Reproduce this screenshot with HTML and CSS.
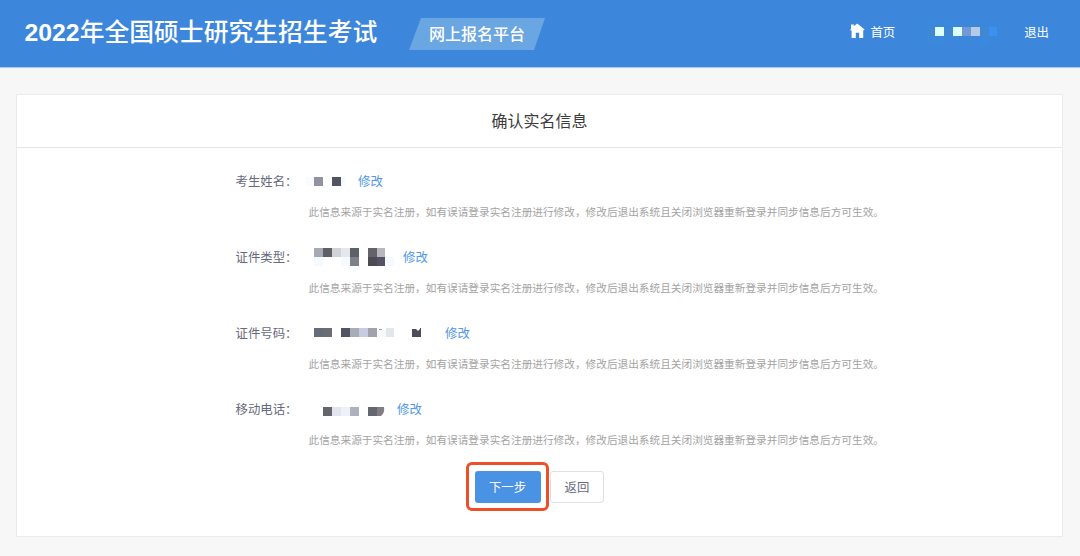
FILE: index.html
```html
<!DOCTYPE html>
<html lang="zh-CN">
<head>
<meta charset="utf-8">
<title>网上报名平台</title>
<link rel="stylesheet" href="styles.css">
</head>
<body>
<header class="header">
  <h1 class="title"><span class="year">2022</span>年全国硕士研究生招生考试</h1>
  <div class="badge">网上报名平台</div>
  <nav class="nav">
    <a class="home"><svg class="home-icon" width="15" height="16" viewBox="0 0 15 16"><path fill="#fff" d="M1 1.4h2.8v1.8L7.2.4 14.6 6.6l-.7 1-.7-.4V15H9.2V9.8H5.8V15H1.6V7.2l-.8.5L.2 6.7 1 6z"/></svg>首页</a>
    <svg class="user" width="94" height="32" viewBox="0 0 94 32">
      <rect x="1" y="4" width="92" height="24" rx="12" fill="#3a87dc"/>
      <path fill="#3b89de" d="M17 3h9v6h-9zM34 3h9v6h-9zM17 21h18v5H17zM70 21h9v8h-9z"/>
      <path fill="#4088d0" d="M17 12h8v9h-8zM34 12h9v9h-9zM70 12h8v9h-8z"/>
      <path fill="#dcffff" d="M25 11h9v9h-9zM43 11h9v9h-9z"/>
      <path fill="#7299d5" d="M52 11h9v9h-9z"/><path fill="#b6c9e9" d="M61 11h9v9h-9z"/><path fill="#3d8ff0" d="M79 11h8v9h-8z"/>
    </svg>
    <a class="logout">退出</a>
  </nav>
</header>
<main class="card">
  <h2 class="card-title">确认实名信息</h2>
  <div class="form">
    <div class="row">
      <div class="label"><span>考生姓名</span><span class="colon">：</span></div>
      <div class="value">
        <svg width="50" height="32" viewBox="0 0 50 32"><path fill="#f9fcff" d="M1 12h8v9H1zM36 12h5v9h-5z"/><path fill="#9293a0" d="M9 12h9v9H9z"/><path fill="#525463" d="M27 12h9v9h-9z"/></svg>
        <a class="link">修改</a>
      </div>
      <p class="note">此信息来源于实名注册，如有误请登录实名注册进行修改，修改后退出系统且关闭浏览器重新登录并同步信息后方可生效。</p>
    </div>
    <div class="row">
      <div class="label"><span>证件类型</span><span class="colon">：</span></div>
      <div class="value">
        <svg width="95" height="32" viewBox="0 0 95 32"><path fill="#f5faff" d="M9 16h9v9H9zM36 16h9v9h-9zM80 16h9v9h-9z"/><path fill="#a7a9b5" d="M9 7h9v9H9z"/><path fill="#5e6068" d="M18 7h9v9h-9zM45 7h9v9h-9z"/><path fill="#d2d3d6" d="M27 7h9v9h-9z"/><path fill="#e5e7ed" d="M36 7h9v9h-9z"/><path fill="#7e808b" d="M45 16h9v9h-9z"/><path fill="#64636c" d="M63 7h9v9h-9z"/><path fill="#b7b8bd" d="M72 7h8v9h-8z"/><path fill="#4b4b51" d="M63 16h9v9h-9z"/><path fill="#535365" d="M72 16h8v9h-8z"/></svg>
        <a class="link">修改</a>
      </div>
      <p class="note">此信息来源于实名注册，如有误请登录实名注册进行修改，修改后退出系统且关闭浏览器重新登录并同步信息后方可生效。</p>
    </div>
    <div class="row">
      <div class="label"><span>证件号码</span><span class="colon">：</span></div>
      <div class="value">
        <svg width="137" height="32" viewBox="0 0 137 32"><path fill="#666b78" d="M9 11h9v9H9z"/><path fill="#6b6d75" d="M18 11h9v9h-9z"/><path fill="#515563" d="M36 11h9v9h-9z"/><path fill="#a9abb5" d="M45 11h9v9h-9z"/><path fill="#c9cce0" d="M54 11h9v9h-9z"/><path fill="#a0a2ac" d="M63 11h9v9h-9zM74 12h3v1h-3z"/><path fill="#f6f9f9" d="M72 13h9v7h-9z"/><path fill="#e4e7ea" d="M81 11h8v9h-8z"/><path fill="#4b4d59" d="M107 12h4l2 2 2-2v-1h1v9h-9z"/></svg>
        <a class="link">修改</a>
      </div>
      <p class="note">此信息来源于实名注册，如有误请登录实名注册进行修改，修改后退出系统且关闭浏览器重新登录并同步信息后方可生效。</p>
    </div>
    <div class="row">
      <div class="label"><span>移动电话</span><span class="colon">：</span></div>
      <div class="value">
        <svg width="89" height="32" viewBox="0 0 89 32"><path fill="#65666d" d="M18 14h9v9h-9z"/><path fill="#e2e5ec" d="M27 14h9v9h-9z"/><path fill="#eef2f8" d="M36 14h9v9h-9z"/><path fill="#afb1be" d="M45 14h9v9h-9z"/><path fill="#646670" d="M63 14h9v9h-9z"/><path fill="#807e84" d="M72 14h7q1 6-3 9h-4z"/></svg>
        <a class="link">修改</a>
      </div>
      <p class="note">此信息来源于实名注册，如有误请登录实名注册进行修改，修改后退出系统且关闭浏览器重新登录并同步信息后方可生效。</p>
    </div>
  </div>
  <div class="actions">
    <div class="highlight"><button class="btn primary">下一步</button></div>
    <button class="btn back">返回</button>
  </div>
</main>
</body>
</html>
```
FILE: styles.css
```css
* { box-sizing: border-box; }
body {
  margin: 0;
  height: 556px;
  overflow: hidden;
  background: #f7f7f7;
  font-family: "Noto Sans CJK SC", sans-serif;
  font-size: 12.4px;
  color: #666a7b;
}
h1, h2, p { margin: 0; }
svg { display: block; flex: none; }
.header {
  display: flex;
  align-items: flex-start;
  height: 68px;
  padding-left: 24.5px;
  background: #3c87db;
  border-bottom: 1px solid #a9caf0;
  color: #fff;
}
.title {
  width: 384.5px;
  padding-top: 10px;
  font-size: 24.8px;
  line-height: 40px;
  font-weight: 500;
  white-space: nowrap;
}
.year { font-family: "Liberation Sans", sans-serif; font-weight: 700; }
.badge {
  width: 136px;
  height: 32px;
  margin-top: 18px;
  padding-left: 20px;
  background: #69a6e2;
  clip-path: polygon(12px 0, 100% 0, 125px 100%, 0 100%);
  font-size: 16px;
  font-weight: 500;
  line-height: 30px;
}
.nav {
  display: flex;
  align-items: center;
  height: 32px;
  margin: 16px 31px 0 auto;
}
.home { display: flex; align-items: center; gap: 5px; }
.home-icon { margin-top: -2px; }
.user { margin-left: 15px; }
.logout { margin-left: 20px; }
.card {
  width: 1047px;
  height: 443px;
  margin: 26px 0 0 16px;
  background: #fff;
  border: 1px solid #ebebeb;
}
.card-title {
  height: 53px;
  border-bottom: 1px solid #e6e6e6;
  color: #3c3c3c;
  font-size: 16px;
  font-weight: 400;
  line-height: 50px;
  text-align: center;
}
.form { padding: 17px 0 0 218px; }
.row {
  display: grid;
  grid-template-columns: 70px 1fr;
  grid-template-rows: 32px 44.1px;
}
.label, .link { line-height: 32px; white-space: nowrap; }
.label { display: flex; padding-left: .5px; }
.colon { font-feature-settings: "halt"; }
.value { display: flex; gap: 3px; }
.link { color: #5297ec; }
.note {
  grid-column: 2;
  padding-left: 3.5px;
  color: #a3a3a3;
  font-size: 10.66px;
  line-height: 29px;
  white-space: nowrap;
}
.actions { display: flex; align-items: flex-start; gap: 1px; margin: -7.4px 0 0 449px; }
.highlight {
  padding: 6px 5px 5px 6px;
  border: 3px solid #ee4f28;
  border-radius: 6px;
}
.btn {
  display: block;
  height: 32px;
  padding: 0 1px 0 0;
  border-radius: 3px;
  font: inherit;
}
.primary { width: 66px; border: 0; background: #4a92e3; color: #fff; }
.back { width: 54px; margin-top: 9px; padding: 0; border: 1px solid #dfe0e6; background: #fff; color: #666a7b; }
```
